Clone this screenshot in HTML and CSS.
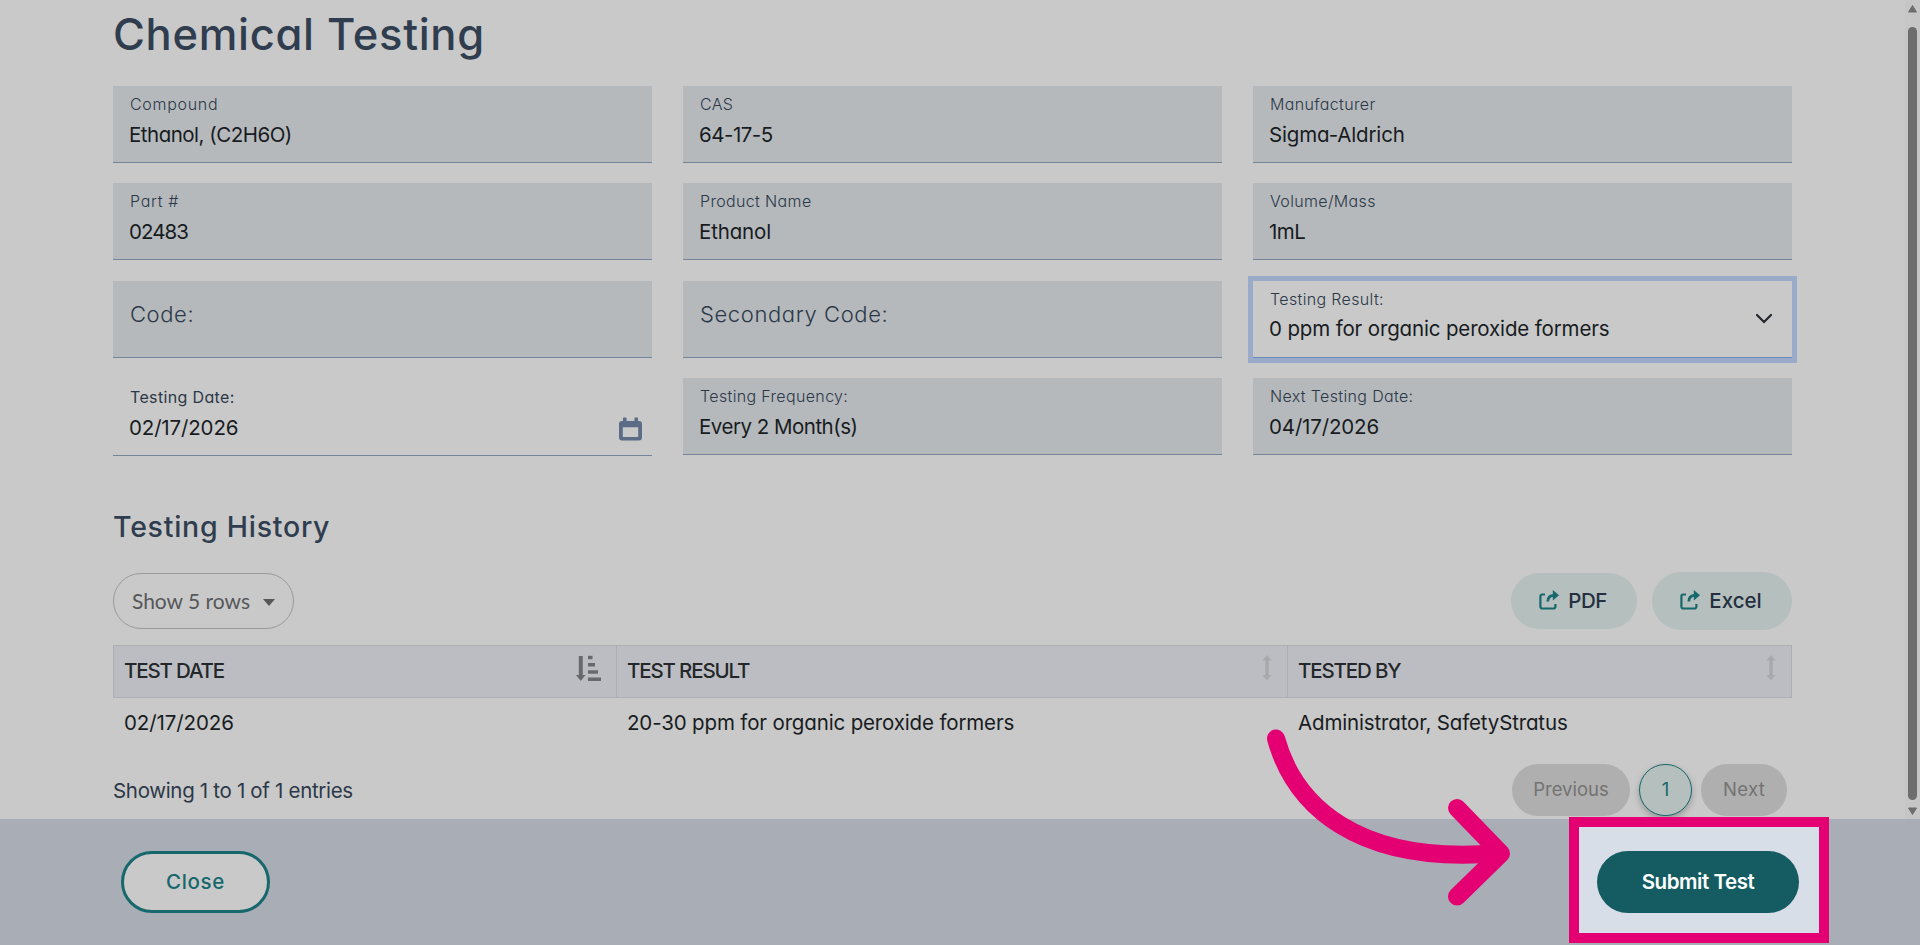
FILE: index.html
```html
<!DOCTYPE html>
<html lang="en">
<head>
    <meta charset="UTF-8">
    <meta name="viewport" content="width=device-width, initial-scale=1.0">
    <title>Chemical Testing</title>
    <link rel="stylesheet" href="styles.css">
</head>
<body>
    <div class="scroll-area">
        <main class="content">
            <h1>Chemical Testing</h1>
            <div class="fields">
                <div class="field">
                    <label class="wide">Compound</label>
                    <span class="value tight">Ethanol, (C2H6O)</span>
                </div>
                <div class="field">
                    <label>CAS</label>
                    <span class="value tight">64-17-5</span>
                </div>
                <div class="field">
                    <label>Manufacturer</label>
                    <span class="value">Sigma-Aldrich</span>
                </div>
                <div class="field">
                    <label class="wide">Part #</label>
                    <span class="value tighter">02483</span>
                </div>
                <div class="field">
                    <label>Product Name</label>
                    <span class="value">Ethanol</span>
                </div>
                <div class="field">
                    <label>Volume/Mass</label>
                    <span class="value tight">1mL</span>
                </div>
                <div class="field empty">
                    <label>Code:</label>
                </div>
                <div class="field empty">
                    <label>Secondary Code:</label>
                </div>
                <div class="field select">
                    <label>Testing Result:</label>
                    <span class="value">0 ppm for organic peroxide formers</span>
                    <svg class="chevron" width="18" height="12" viewBox="0 0 18 12"><path d="M2 2l7 7 7-7" fill="none" stroke="#23272b" stroke-width="2.2" stroke-linecap="round"/></svg>
                </div>
                <div class="field date">
                    <label>Testing Date:</label>
                    <span class="value">02/17/2026</span>
                    <svg class="calendar" width="23" height="24" viewBox="0 0 23 24"><path fill="#5c6c86" fill-rule="evenodd" d="M4 1.2a.8.8 0 0 1 .8-.8h2a.8.8 0 0 1 .8.8V4h7.8V1.2a.8.8 0 0 1 .8-.8h2a.8.8 0 0 1 .8.8V4h1a3 3 0 0 1 3 3v13.5a3 3 0 0 1-3 3H3a3 3 0 0 1-3-3V7a3 3 0 0 1 3-3h1zM3.8 10.3v9.8h15.4v-9.8z"/></svg>
                </div>
                <div class="field">
                    <label>Testing Frequency:</label>
                    <span class="value tight">Every 2 Month(s)</span>
                </div>
                <div class="field">
                    <label>Next Testing Date:</label>
                    <span class="value">04/17/2026</span>
                </div>
            </div>

            <h2>Testing History</h2>
            <div class="toolbar">
                <button class="rows-button">Show 5 rows <i class="caret"></i></button>
                <div class="exports">
                    <button class="export-button">
                        <svg width="20" height="20" viewBox="0 0 20 20"><path d="M6 4.5H3.2A1.8 1.8 0 0 0 1.4 6.3V16.7a1.8 1.8 0 0 0 1.8 1.8H14.6a1.8 1.8 0 0 0 1.8-1.8V14" fill="none" stroke="#17686c" stroke-width="2.2"/><path d="M8.8 11.5C8.8 7 11 5.4 15 5.3" fill="none" stroke="#17686c" stroke-width="2.8"/><path d="M13.8 0l6.2 5.2-6.2 5.2z" fill="#17686c"/></svg>
                        PDF
                    </button>
                    <button class="export-button excel">
                        <svg width="20" height="20" viewBox="0 0 20 20"><path d="M6 4.5H3.2A1.8 1.8 0 0 0 1.4 6.3V16.7a1.8 1.8 0 0 0 1.8 1.8H14.6a1.8 1.8 0 0 0 1.8-1.8V14" fill="none" stroke="#17686c" stroke-width="2.2"/><path d="M8.8 11.5C8.8 7 11 5.4 15 5.3" fill="none" stroke="#17686c" stroke-width="2.8"/><path d="M13.8 0l6.2 5.2-6.2 5.2z" fill="#17686c"/></svg>
                        Excel
                    </button>
                </div>
            </div>

            <table class="history">
                <thead>
                    <tr>
                        <th class="col-date"><div class="head">TEST DATE
                            <svg width="25" height="26" viewBox="0 0 25 26" fill="#68696b"><path d="M2.8 1h4v19h2.7L4.8 26 0 20h2.8z"/><path d="M12 .8h4.5v3.4H12zM12 8h7v3.4h-7zM12 15.3h10v3.4H12zM12 22.5h13v3.4H12z"/></svg>
                        </div></th>
                        <th class="col-result"><div class="head">TEST RESULT
                            <svg width="10" height="26" viewBox="0 0 10 26" fill="#a8a9ad"><path d="M5 0l4.6 5.5H6.7V20h2.9L5 25.5.4 20h2.9V5.5H.4z"/></svg>
                        </div></th>
                        <th class="col-by"><div class="head">TESTED BY
                            <svg width="10" height="26" viewBox="0 0 10 26" fill="#a8a9ad"><path d="M5 0l4.6 5.5H6.7V20h2.9L5 25.5.4 20h2.9V5.5H.4z"/></svg>
                        </div></th>
                    </tr>
                </thead>
                <tbody>
                    <tr>
                        <td class="test-date">02/17/2026</td>
                        <td>20-30 ppm for organic peroxide formers</td>
                        <td>Administrator, SafetyStratus</td>
                    </tr>
                </tbody>
            </table>

            <div class="summary">
                <span class="entries">Showing 1 to 1 of 1 entries</span>
                <div class="pagination">
                    <button class="page-button previous">Previous</button>
                    <button class="page-button current">1</button>
                    <button class="page-button next">Next</button>
                </div>
            </div>
        </main>
        <div class="scrollbar">
            <svg width="9" height="8" viewBox="0 0 9 8"><path d="M4.5.5L8.5 7h-8z" fill="#6d6d6d" stroke="#6d6d6d" stroke-linejoin="round"/></svg>
            <div class="thumb"></div>
            <svg width="9" height="8" viewBox="0 0 9 8"><path d="M4.5 7.5L8.5 1h-8z" fill="#6d6d6d" stroke="#6d6d6d" stroke-linejoin="round"/></svg>
        </div>
    </div>

    <footer class="actions">
        <button class="close-button">Close</button>
        <div class="submit-wrap">
            <div class="highlight"></div>
            <button class="submit-button">Submit Test</button>
        </div>
    </footer>

    <!-- arrow pointing at the submit button -->
    <svg class="arrow" width="260" height="190" viewBox="0 0 260 190" fill="none" stroke="#e40072" stroke-width="18" stroke-linecap="round" stroke-linejoin="round">
        <path d="M16 18.5C34 84 96 146 240 133"/>
        <path d="M197 88l44 45.5-44 43"/>
    </svg>
</body>
</html>
```
FILE: styles.css
```css
* {
    box-sizing: border-box;
}
body {
    margin: 0;
    height: 945px;
    overflow: hidden;
    position: relative;
    font-family: Inter, "Liberation Sans", sans-serif;
    font-feature-settings: "cv11";
    font-size: 20.5px;
    color: #181c1f;
    background: #c9c9c9;
}
h1, h2 {
    margin: 0;
    font-weight: 500;
    color: #2f3d4f;
}
h1 {
    font-size: 43.5px;
    line-height: 52px;
    letter-spacing: 0.7px;
}
h2 {
    margin-top: 53px;
    font-size: 28.5px;
    line-height: 34px;
    letter-spacing: 0.75px;
}
button {
    font: inherit;
    font-feature-settings: inherit;
    border: none;
    padding: 0;
    cursor: pointer;
    display: flex;
    align-items: center;
    justify-content: center;
}
.scroll-area {
    display: flex;
    height: 819px;
    overflow: hidden;
}
.content {
    width: 1905px;
    padding: 8px 113px 0;
}

/* form fields */
.fields {
    display: grid;
    grid-template-columns: repeat(3, 539px);
    gap: 20.9px 31px;
    margin-top: 26px;
    margin-bottom: 54px;
    align-items: start;
}
.field {
    position: relative;
    height: 76.6px;
    padding: 8px 16px 0;
    background: #b5b9bc;
    border-bottom: 1px solid #74859a;
}
.field label {
    display: block;
    padding-left: 1px;
    font-size: 16px;
    font-weight: 300;
    line-height: 20px;
    letter-spacing: 0.35px;
    color: #2c3848;
}
.field label.wide {
    letter-spacing: 0.7px;
}
.value {
    display: block;
    margin-top: 8.5px;
    line-height: 24px;
    letter-spacing: -0.15px;
}
.value.tight {
    letter-spacing: -0.5px;
}
.value.tighter {
    letter-spacing: -0.95px;
}
.field.empty label {
    padding-top: 12px;
    font-size: 22px;
    line-height: 26px;
    letter-spacing: 0.6px;
}
.field.select {
    background: #c9c9c9;
    border-bottom-color: #6a8ab8;
    box-shadow: 0 0 0 5px #99abc8;
}
.field.date {
    height: 78px;
    padding-top: 9px;
    background: none;
}
.field.date label {
    font-weight: 400;
}
.chevron {
    position: absolute;
    right: 19px;
    top: 32px;
}
.calendar {
    position: absolute;
    right: 10px;
    top: 39px;
}

/* history table */
.toolbar {
    display: flex;
    justify-content: space-between;
    align-items: center;
    height: 58px;
    margin-top: 28px;
}
.rows-button {
    width: 181px;
    height: 56px;
    gap: 13px;
    padding-bottom: 2px;
    border: 1px solid #9a9a9a;
    border-radius: 28px;
    background: none;
    font-family: Lato, sans-serif;
    font-size: 21px;
    color: #555759;
}
.caret {
    margin-top: 5px;
    border: 6.5px solid transparent;
    border-top: 7px solid #555759;
    border-bottom: none;
}
.exports {
    display: flex;
    align-items: center;
    gap: 15px;
}
.export-button {
    width: 126px;
    height: 56px;
    gap: 9px;
    padding: 0 2px 2px 0;
    border-radius: 28px;
    background: #b5bfbd;
    font-weight: 500;
    letter-spacing: -0.5px;
    color: #243040;
}
.export-button.excel {
    width: 140px;
    height: 58px;
    border-radius: 29px;
    letter-spacing: 0;
}
.history {
    width: 1679px;
    margin-top: 15px;
    table-layout: fixed;
    border-collapse: collapse;
}
.history th {
    height: 52px;
    padding: 0 15px 2px 10px;
    border: 1px solid #adafb3;
    background: #bcbdc3;
    font-size: 20.5px;
    font-weight: 500;
    letter-spacing: -1.15px;
    text-align: left;
    color: #24272a;
}
.col-date {
    width: 503px;
}
.col-result {
    width: 671px;
}
.head {
    display: flex;
    justify-content: space-between;
    align-items: center;
}
.head svg {
    margin-bottom: 5px;
}
.history td {
    height: 50px;
    padding: 0 10.5px 2px;
    letter-spacing: -0.15px;
}
.history td.test-date {
    letter-spacing: -0.1px;
}
.summary {
    display: flex;
    justify-content: space-between;
    margin-top: 16px;
}
.entries {
    line-height: 54px;
    letter-spacing: -0.32px;
    color: #2c3848;
}
.pagination {
    display: flex;
    gap: 9px;
    margin-right: 5px;
}
.page-button {
    height: 52px;
    padding-bottom: 1px;
    border-radius: 26px;
    background: #afafaf;
    font-size: 18.5px;
    color: #737373;
}
.previous {
    width: 118px;
}
.current {
    width: 53px;
    border: 1px solid #17686c;
    background: #b5bfbd;
    box-shadow: 0 3px 6px rgba(0, 0, 0, 0.25);
    color: #17686c;
}
.next {
    width: 86px;
    letter-spacing: 0.3px;
}

/* scrollbar */
.scrollbar {
    display: flex;
    flex-direction: column;
    align-items: center;
    width: 15px;
    padding: 5px 0 4px;
    background: #c6c6c6;
}
.thumb {
    flex: 1;
    width: 9px;
    margin: 14px 0 7px;
    border-radius: 5px;
    background: #6d6d6d;
}

/* bottom bar */
.actions {
    display: flex;
    justify-content: space-between;
    align-items: center;
    height: 126px;
    padding: 0 121px;
    background: #a9adb6;
}
.close-button {
    width: 149px;
    height: 62px;
    padding-bottom: 1px;
    border: 3px solid #17686c;
    border-radius: 31px;
    background: #c9c9c9;
    font-weight: 500;
    letter-spacing: 0.7px;
    color: #17686c;
}
.submit-wrap {
    position: relative;
}
.highlight {
    position: absolute;
    left: -28px;
    top: -34px;
    width: 260px;
    height: 126px;
    border: 10px solid #e40072;
    background: #d8dee7;
}
.submit-button {
    position: relative;
    width: 202px;
    height: 62px;
    padding-bottom: 1px;
    border-radius: 31px;
    background: #145c61;
    font-weight: 600;
    letter-spacing: -0.45px;
    color: #fff;
}
.arrow {
    position: absolute;
    left: 1260px;
    top: 720px;
}
```
